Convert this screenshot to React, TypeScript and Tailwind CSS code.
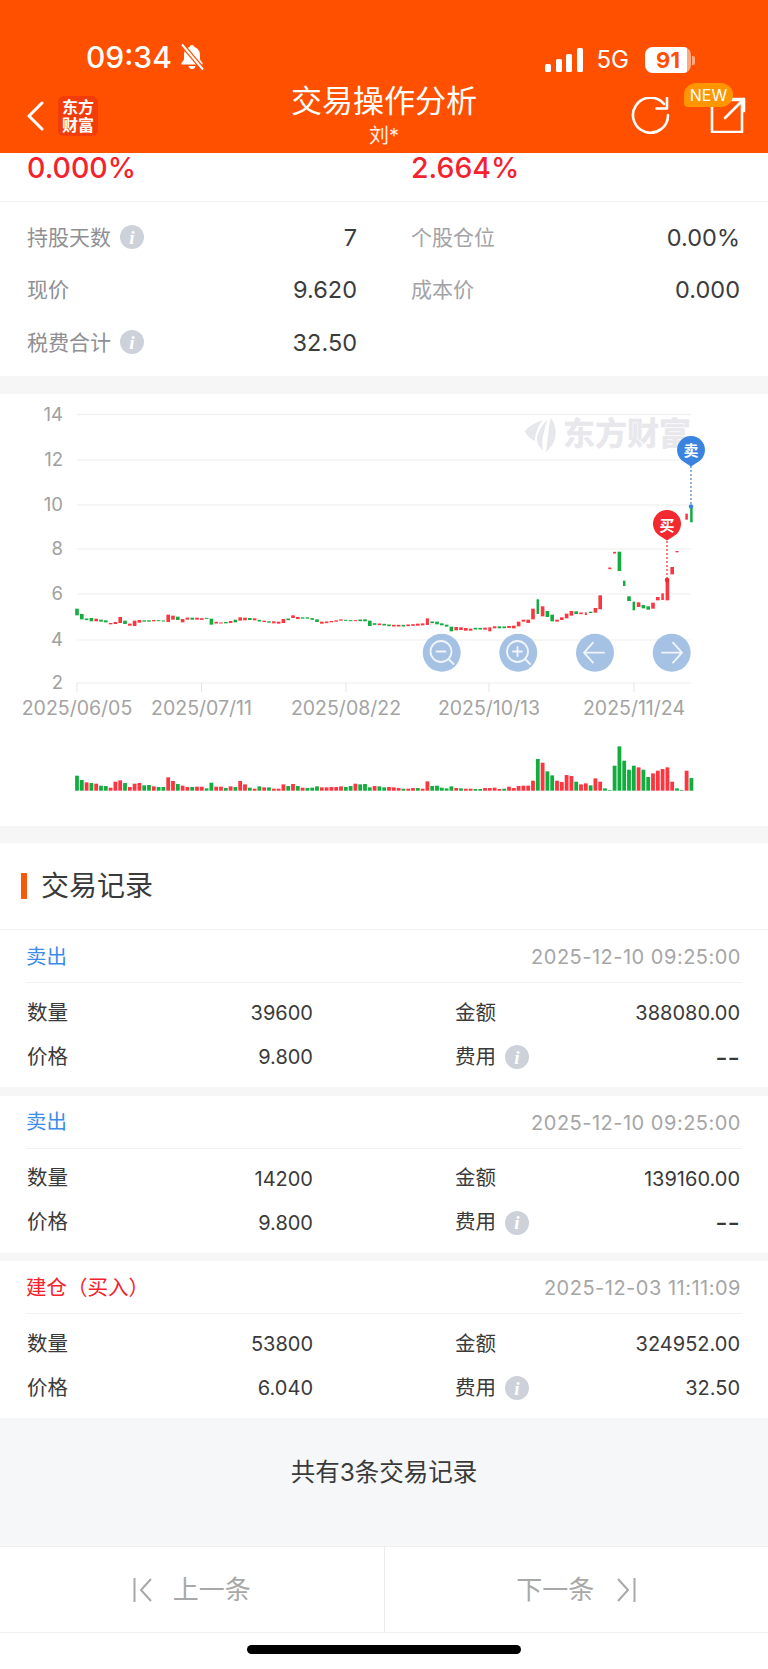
const RED = "#fb3640";
const GREEN = "#12ad3e";

// volume bars, one per trading day: height in px * 3, colour
const VOLUMES: [number, "r" | "g"][] = [
  [45, "g"], [32, "g"], [25, "r"], [23, "g"], [21, "r"], [15, "g"], [14, "g"], [9, "r"], [27, "r"], [31, "r"],
  [23, "g"], [11, "r"], [21, "r"], [23, "r"], [16, "g"], [17, "g"], [13, "r"], [11, "g"], [11, "g"], [40, "r"],
  [29, "r"], [20, "g"], [15, "r"], [11, "r"], [11, "g"], [12, "r"], [12, "r"], [7, "g"], [24, "g"], [12, "r"],
  [12, "r"], [8, "g"], [13, "r"], [11, "g"], [29, "r"], [19, "r"], [9, "g"], [6, "r"], [13, "g"], [10, "r"],
  [10, "g"], [6, "r"], [6, "r"], [19, "r"], [14, "g"], [20, "r"], [14, "g"], [9, "r"], [8, "g"], [9, "g"],
  [13, "g"], [10, "r"], [10, "r"], [11, "r"], [11, "r"], [13, "r"], [11, "g"], [14, "g"], [21, "r"], [19, "g"],
  [20, "g"], [10, "g"], [14, "r"], [13, "g"], [10, "g"], [11, "r"], [10, "r"], [8, "r"], [6, "g"], [6, "r"],
  [8, "r"], [8, "g"], [6, "r"], [28, "r"], [14, "g"], [15, "g"], [9, "g"], [7, "g"], [13, "g"], [8, "r"],
  [7, "g"], [6, "r"], [6, "r"], [5, "g"], [5, "g"], [8, "r"], [8, "r"], [9, "r"], [5, "r"], [6, "g"],
  [12, "r"], [8, "r"], [14, "r"], [15, "r"], [15, "r"], [30, "r"], [95, "g"], [84, "r"], [58, "g"], [46, "g"],
  [30, "r"], [26, "r"], [47, "r"], [44, "r"], [27, "g"], [19, "r"], [22, "r"], [16, "g"], [37, "r"], [27, "r"],
  [7, "g"], [2, "g"], [75, "g"], [133, "g"], [90, "g"], [63, "g"], [75, "g"], [70, "r"], [63, "g"], [41, "g"],
  [52, "r"], [60, "r"], [65, "r"], [70, "r"], [27, "r"], [7, "g"], [2, "g"], [60, "r"], [38, "g"],
];

// candles: centre and body height, measured at 3x from y=390. null = no candle that day
type Candle = [number, number, "r" | "g", number?] | null;
const CANDLES: Candle[] = [
  [666, 20, "g"], [680, 16, "g"], [688, 5, "g"], [689, 10, "g"], [690, 8, "r"], [692, 6, "g"], [694, 6, "g"], [701, 4, "r"],
  [699, 6, "r"], [690, 18, "r"], [697, 10, "g"], [704, 6, "r"], [700, 16, "r"], [694, 8, "r"], [693, 4, "g"], [693, 4, "g"],
  [692, 4, "r"], [692, 3, "g"], [693, 3, "g"], [685, 22, "r"], [683, 12, "r"], [685, 10, "g"], [692, 10, "r"], [686, 6, "r"],
  [686, 6, "g"], [686, 6, "r"], [687, 5, "r"], [685, 3, "g"], [695, 18, "g"], [698, 5, "r"], [699, 3, "r"], [698, 4, "g"],
  [696, 6, "r"], [693, 8, "g"], [687, 10, "r"], [687, 8, "r"], [687, 6, "g"], [688, 6, "r"], [692, 5, "g"], [694, 4, "r"],
  [696, 4, "g"], [697, 6, "r"], [698, 6, "r"], [693, 12, "r"], [688, 5, "g"], [680, 8, "r"], [684, 6, "r"], [684, 4, "g"],
  [684, 4, "g"], [687, 5, "g"], [692, 8, "g"], [698, 6, "r"], [697, 5, "r"], [695, 4, "r"], [693, 4, "r"], [690, 4, "r"],
  [691, 3, "g"], [692, 3, "g"], [692, 3, "r"], [691, 5, "g"], [691, 6, "g"], [700, 16, "g"], [702, 5, "g"], [703, 5, "r"],
  [704, 5, "g"], [706, 5, "g"], [707, 5, "r"], [707, 5, "r"], [707, 5, "g"], [706, 5, "r"], [705, 5, "r"], [704, 6, "r"],
  [703, 6, "r"], [695, 20, "r", 3], [697, 5, "g"], [699, 8, "g"], [703, 6, "g"], [707, 6, "g"], [717, 14, "g"], [716, 10, "r"],
  [716, 8, "r"], [718, 8, "r"], [719, 6, "r"], [716, 5, "g"], [716, 5, "g"], [716, 6, "r"], [718, 12, "r", 3], [712, 6, "r"],
  [712, 6, "g"], [712, 5, "g"], [711, 6, "r"], [711, 8, "r"], [702, 14, "r"], [692, 6, "r"], [694, 10, "r"], [672, 32, "r"],
  [650, 44, "g", 2.5], [664, 30, "r"], [672, 18, "g"], [684, 20, "g"], [692, 6, "r"], [686, 8, "r"], [678, 14, "r"], [670, 14, "r"],
  [668, 8, "g"], [670, 5, "r"], [671, 8, "r", 2], [667, 4, "g"], [661, 14, "r"], [637, 42, "r"], null, [535, 5, "r", 3],
  [488, 5, "r", 3], [514, 58, "g"], [580, 16, "g", 2.5], [626, 14, "g"], [648, 26, "g", 2.5], [644, 14, "r"], [650, 10, "g"], [654, 10, "g"],
  [647, 18, "r"], [626, 10, "r"], [620, 20, "r", 2.5], [598, 66, "r"], [542, 22, "r"], [485, 4, "r", 3], null, [380, 18, "r", 2.5],
  [372, 50, "g", 2.5],
];

const GRID_Y = [414.5, 460, 505, 549, 594, 640, 683];
const PRICE_LABELS = ["14", "12", "10", "8", "6", "4", "2"];
const DATES: [number, string][] = [
  [77, "2025/06/05"],
  [201.5, "2025/07/11"],
  [346, "2025/08/22"],
  [489, "2025/10/13"],
  [634, "2025/11/24"],
];

function KlineChart() {
  // svg origin sits at page y=394, so everything below is shifted by -394
  return (
    <svg width="768" height="432" viewBox="0 394 768 432" className="block">
      {GRID_Y.map((y) => (
        <line key={y} x1="77" x2="691" y1={y} y2={y} stroke="#f3f3f4" strokeWidth="1.5" />
      ))}
      {PRICE_LABELS.map((label, i) => (
        <text key={label} x="63" y={GRID_Y[i] + 6} textAnchor="end" fontSize="18.5" fill="#a0a0a0">
          {label}
        </text>
      ))}
      {DATES.map(([x, label]) => (
        <g key={label}>
          <line x1={x} x2={x} y1="683" y2="692" stroke="#e4e4e4" strokeWidth="1" />
          <text x={x} y="715" textAnchor="middle" fontSize="19.5" fill="#a3a3a3">
            {label}
          </text>
        </g>
      ))}

      {/* watermark */}
      <g fill="#e6e7ea">
        <path d="M551 418C558 428 558 442 546 452C548 440 548 428 551 418z" />
        <path d="M547 420C544 432 541 441 543 450C535 444 534 434 547 420z" />
        <path d="M543 420C534 423 528 427 525 431C527 437 531 439 535 441C535 434 538 426 543 420z" />
      </g>
      <text x="563" y="445" fontSize="32" fontWeight="700" fill="#e8e8ec" stroke="#e8e8ec" strokeWidth="0.5">东方财富</text>

      {CANDLES.map((c, i) => {
        if (!c) return null;
        const w = c[3] ?? 3.6;
        return (
          <rect
            key={i}
            x={77 + 4.8 * i - w / 2}
            y={390 + (c[0] - c[1] / 2) / 3}
            width={w}
            height={c[1] / 3}
            fill={c[2] === "r" ? RED : GREEN}
          />
        );
      })}

      {VOLUMES.map(([h, color], i) => (
        <rect
          key={i}
          x={77 + 4.8 * i - 1.9}
          y={790.7 - h / 3}
          width="3.8"
          height={h / 3}
          fill={color === "r" ? RED : GREEN}
        />
      ))}

      {/* sell marker */}
      <line x1="691" x2="691" y1="466" y2="506" stroke="#3a84e0" strokeWidth="1.2" strokeDasharray="2 2" />
      <circle cx="691" cy="506.5" r="2.2" fill="#3a84e0" />
      <path d="M691 466.5l-7-4.5a14 14 0 1 1 14 0z" fill="#3a84e0" />
      <text x="691" y="455.5" textAnchor="middle" fontSize="15" fontWeight="700" fill="#fff">卖</text>

      {/* buy marker */}
      <line x1="667" x2="667" y1="541" y2="580" stroke="#f22a2f" strokeWidth="1.2" strokeDasharray="2 2" />
      <circle cx="667" cy="580" r="2.2" fill="#f22a2f" />
      <path d="M667 540.5l-7-4.5a14 14 0 1 1 14 0z" fill="#f22a2f" />
      <text x="667" y="530.5" textAnchor="middle" fontSize="15" fontWeight="700" fill="#fff">买</text>

      {/* zoom and pan buttons */}
      {[441.7, 518.3, 595, 671.7].map((cx) => (
        <circle key={cx} cx={cx} cy="652.7" r="19" fill="#a5c2e5" />
      ))}
      <g fill="none" stroke="#fff" strokeWidth="1.8" strokeLinecap="round" strokeLinejoin="round" opacity="0.85">
        <circle cx="441" cy="651.5" r="10.5" />
        <path d="M436.5 651.5h9M449 659.5l4.5 4.5" />
        <circle cx="517.5" cy="651.5" r="10.5" />
        <path d="M513 651.5h9M517.5 647v9M525.5 659.5l4.5 4.5" />
        <path d="M585 652.7h19M593 642.7l-9 10 9 10" />
        <path d="M662 652.7h19M673 642.7l9 10-9 10" />
      </g>
    </svg>
  );
}

function InfoDot() {
  return (
    <span className="flex h-6 w-6 items-center justify-center rounded-full bg-[#cdd1d9] font-['Liberation_Serif',serif] text-[19px] font-bold italic leading-none text-white">
      i
    </span>
  );
}

function SummaryRow({ left, value, right, rightValue, info }: { left: string; value: string; right?: string; rightValue?: string; info?: boolean }) {
  return (
    <div className="flex h-[52.5px] items-center text-[21px]">
      <div className="flex w-[330px] items-center justify-between">
        <span className="flex items-center gap-[9px] text-[#8f8f94]">
          {left}
          {info && <InfoDot />}
        </span>
        <span className="text-[23.5px] text-[#3c3c3c]">{value}</span>
      </div>
      {right && (
        <div className="ml-[54px] flex flex-1 items-center justify-between">
          <span className="text-[#a3a3a7]">{right}</span>
          <span className="text-[23.5px] text-[#3c3c3c]">{rightValue}</span>
        </div>
      )}
    </div>
  );
}

function TradeCard({ kind, time, qty, amount, price, fee, sell }: { kind: string; time: string; qty: string; amount: string; price: string; fee: string; sell?: boolean }) {
  return (
    <div className="bg-white px-[26px] pb-2">
      <div className="flex h-[53px] items-center justify-between border-b border-[#f2f2f3] pr-px pt-[2px] text-[20.5px]">
        <span className={sell ? "text-[#3b8bea]" : "text-[#f5222d]"}>{kind}</span>
        <span className="text-[20px] tracking-[0.5px] text-[#a6a6a6]">{time}</span>
      </div>
      <div className="pt-2 text-[20.5px] text-[#3a3a3a]">
        <div className="flex h-[44px] items-center">
          <div className="flex w-[287px] items-center justify-between pl-px">
            <span>数量</span>
            <span className="text-[20px]">{qty}</span>
          </div>
          <div className="ml-[142px] flex flex-1 items-center justify-between pr-[2px]">
            <span>金额</span>
            <span className="text-[20px]">{amount}</span>
          </div>
        </div>
        <div className="flex h-[44px] items-center">
          <div className="flex w-[287px] items-center justify-between pl-px">
            <span>价格</span>
            <span className="text-[20px]">{price}</span>
          </div>
          <div className="ml-[142px] flex flex-1 items-center justify-between pr-[2px]">
            <span className="flex items-center gap-[9px]">
              费用
              <InfoDot />
            </span>
            <span className={fee === "--" ? "text-[27px] leading-none" : "text-[20px]"}>{fee}</span>
          </div>
        </div>
      </div>
    </div>
  );
}

function Header() {
  return (
    <header className="h-[153px] bg-[#ff5000] text-white">
      {/* status bar */}
      <div className="flex h-[84px] items-end justify-between pb-[10px] pl-[86px] pr-[73px]">
        <div className="flex items-center gap-[7px]">
          <span className="text-[30px] font-medium leading-[34px]">09:34</span>
          <svg width="26" height="30" viewBox="0 0 26 28" fill="#fff">
            <path d="M13 2c-1.3 0-2.2.8-2.3 2C7 5 5 8.300 5 12v4.500L2.500 20c-.5.8 0 1.500.9 1.500h19.200c.9 0 1.400-.7.9-1.500L21 16.500V12c0-3.700-2-7-5.700-8-.1-1.200-1-2-2.300-2zM9.500 23c.4 1.800 1.800 3 3.500 3s3.100-1.200 3.500-3z" />
            <path d="M3 1.500l21 25" stroke="#ff5000" strokeWidth="4.500" />
            <path d="M3 1.500l21 25" stroke="#fff" strokeWidth="2" />
          </svg>
        </div>
        <div className="flex items-center pb-[1px]">
          <div className="flex items-end gap-[4.500px]">
            <span className="h-2 w-[6px] rounded-[1.500px] bg-white" />
            <span className="h-[13px] w-[6px] rounded-[1.500px] bg-white" />
            <span className="h-[18px] w-[6px] rounded-[1.500px] bg-white" />
            <span className="h-6 w-[6px] rounded-[1.500px] bg-white" />
          </div>
          <span className="ml-[14px] text-[24px] leading-none">5G</span>
          <div className="relative ml-[16px] h-[26px] w-[46px] overflow-hidden rounded-[8px] bg-white/50">
            <div className="h-full w-[91%] bg-white" />
            <span className="absolute inset-0 flex items-center justify-center text-[22px] font-bold leading-none text-[#ff5000]">91</span>
          </div>
          <span className="ml-[1px] h-[9px] w-[3px] rounded-r-[2px] bg-white/50" />
        </div>
      </div>

      {/* nav bar */}
      <div className="grid h-[69px] grid-cols-3">
        <div className="flex items-center gap-[14px] pb-[6px] pl-[26px]">
          <svg width="18" height="30" viewBox="0 0 18 30" fill="none" stroke="#fff" strokeWidth="3" strokeLinecap="round" strokeLinejoin="round">
            <path d="M16 2L3 15l13 13" />
          </svg>
          <div className="flex h-10 w-10 flex-col items-center justify-center rounded-[6px] bg-[#f23c0c] text-[16px] font-bold leading-[18px]">
            <span>东方</span>
            <span>财富</span>
          </div>
        </div>
        <div className="flex flex-col items-center">
          <span className="-mt-[1px] whitespace-nowrap text-[31px] leading-[36px]">交易操作分析</span>
          <span className="mt-[5px] text-[20px] leading-6 text-white/90">刘*</span>
        </div>
        <div className="flex items-start justify-end pr-[22px] pt-[13px]">
          <svg width="40" height="38" viewBox="0 0 40 38" fill="none" stroke="#fff" strokeWidth="2.600" strokeLinecap="round" strokeLinejoin="round" className="mr-[39px]">
            <path d="M33 7a17.500 17.500 0 1 0 4 11" />
            <path d="M36 1v10.500H25.500" />
          </svg>
          <div className="relative h-[36px] w-[36px]">
            <svg width="36" height="36" viewBox="0 0 36 36" fill="none" stroke="#fff" strokeWidth="2.600" strokeLinecap="round" strokeLinejoin="round">
              <path d="M2 3h30v32H2zM15 21L34 2M22 2h12v12" />
            </svg>
            <span className="absolute -left-[26px] -top-[14px] flex h-6 w-[49px] items-center justify-center rounded-[12px_12px_12px_4px] bg-[#ff9500] text-[16px] leading-none">NEW</span>
          </div>
        </div>
      </div>
    </header>
  );
}

export default function App() {
  return (
    <div className="w-[768px] bg-[#f6f6f7] font-['Inter','Noto_Sans_CJK_SC',sans-serif]">
      <Header />

      {/* summary */}
      <section className="bg-white">
        <div className="flex h-[49px] border-b border-[#f1f1f2] pl-[27px] pb-[16px] text-[28.5px] font-medium leading-[30px] text-[#f5222d]">
          <span className="w-[384px]">0.000%</span>
          <span>2.664%</span>
        </div>
        <div className="px-[27px] pr-[28px] pb-[7.5px] pt-[9px]">
          <SummaryRow left="持股天数" value="7" right="个股仓位" rightValue="0.00%" info />
          <SummaryRow left="现价" value="9.620" right="成本价" rightValue="0.000" />
          <SummaryRow left="税费合计" value="32.50" info />
        </div>
      </section>

      <section className="mt-[18px] bg-white">
        <KlineChart />
      </section>

      {/* trades */}
      <section className="mt-[17px]">
        <div className="flex h-[87px] items-center gap-[14px] border-b border-[#f4f4f5] bg-white pl-[21px]">
          <span className="h-[26px] w-[6px] bg-[#f55a0a]" />
          <span className="text-[28px] text-[#3a3a3a]">交易记录</span>
        </div>
        <div className="flex flex-col gap-[8.500px]">
          <TradeCard sell kind="卖出" time="2025-12-10 09:25:00" qty="39600" amount="388080.00" price="9.800" fee="--" />
          <TradeCard sell kind="卖出" time="2025-12-10 09:25:00" qty="14200" amount="139160.00" price="9.800" fee="--" />
          <TradeCard kind="建仓（买入）" time="2025-12-03 11:11:09" qty="53800" amount="324952.00" price="6.040" fee="32.50" />
        </div>
      </section>

      <div className="flex h-[128px] items-start justify-center bg-[#f6f7f9] pt-[36px] text-[24.500px] leading-9 text-[#3a3a3a]">
        共有3条交易记录
      </div>

      {/* prev / next */}
      <div className="flex h-[87px] border-y border-[#f0f0f1] bg-white text-[26px] text-[#a8a8a8]">
        <div className="flex w-[384.5px] items-center justify-center gap-[20px] border-r border-[#ececed]">
          <svg width="20" height="26" viewBox="0 0 20 26" fill="none" stroke="#a8a8a8" strokeWidth="2">
            <path d="M1.500 1v24M18 2L8 13l10 11" />
          </svg>
          <span>上一条</span>
        </div>
        <div className="flex flex-1 items-center justify-center gap-[22px]">
          <span>下一条</span>
          <svg width="20" height="26" viewBox="0 0 20 26" fill="none" stroke="#a8a8a8" strokeWidth="2">
            <path d="M18.500 1v24M2 2l10 11L2 24" />
          </svg>
        </div>
      </div>

      {/* home indicator */}
      <div className="flex h-[36px] justify-center bg-white pt-[12px]">
        <div className="h-[9px] w-[274px] rounded-full bg-black" />
      </div>
    </div>
  );
}
